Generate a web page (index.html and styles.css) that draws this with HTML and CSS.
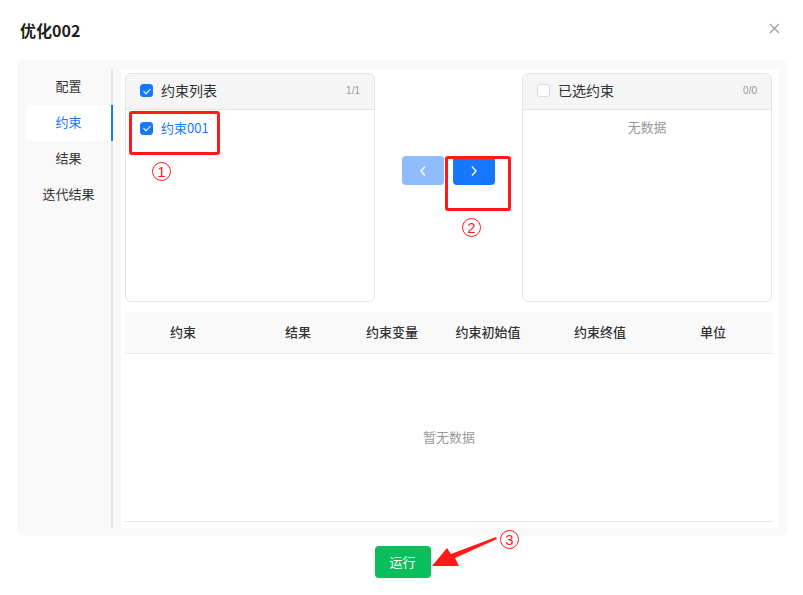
FILE: index.html
```html
<!DOCTYPE html>
<html lang="zh-CN">

<head>
    <meta charset="UTF-8" />
    <title>优化002</title>
    <link rel="stylesheet" href="styles.css">
</head>

<body>
    <div class="dialog">
        <div class="dialog-header">
            <h2 class="dialog-title">优化002</h2>
            <span class="close">
                <svg width="11" height="11" viewBox="0 0 11 11"><path d="M1 1L10 10M10 1L1 10" stroke="#999" stroke-width="1.1" /></svg>
            </span>
        </div>

        <div class="panel">
            <ul class="side-menu">
                <li>配置</li>
                <li class="active">约束</li>
                <li>结果</li>
                <li>迭代结果</li>
            </ul>

            <div class="content">
                <div class="transfer">
                    <div class="transfer-list">
                        <div class="transfer-head">
                            <span class="check checked"></span>
                            <span class="head-title">约束列表</span>
                            <span class="head-count">1/1</span>
                        </div>
                        <div class="transfer-body">
                            <div class="transfer-item">
                                <span class="check checked"></span>
                                <span class="item-text">约束001</span>
                            </div>
                        </div>
                    </div>

                    <div class="transfer-ops">
                        <button class="op-btn disabled">
                            <svg width="8" height="12" viewBox="0 0 8 12"><path d="M6 1.5L2 6l4 4.5" fill="none" stroke="#fff" stroke-width="1.4" /></svg>
                        </button>
                        <button class="op-btn">
                            <svg width="8" height="12" viewBox="0 0 8 12"><path d="M2 1.5L6 6l-4 4.5" fill="none" stroke="#fff" stroke-width="1.4" /></svg>
                        </button>
                    </div>

                    <div class="transfer-list">
                        <div class="transfer-head">
                            <span class="check"></span>
                            <span class="head-title">已选约束</span>
                            <span class="head-count">0/0</span>
                        </div>
                        <div class="transfer-body">
                            <div class="no-data">无数据</div>
                        </div>
                    </div>
                </div>

                <div class="table">
                    <div class="table-head">
                        <div>约束</div>
                        <div>结果</div>
                        <div>约束变量</div>
                        <div>约束初始值</div>
                        <div>约束终值</div>
                        <div>单位</div>
                    </div>
                    <div class="table-empty">暂无数据</div>
                </div>
            </div>
        </div>

        <div class="dialog-footer">
            <button class="run-btn">运行</button>
        </div>

        <!-- 注释标记 -->
        <div class="mark box-1"></div>
        <div class="mark box-2"></div>
        <span class="num num-1">1</span>
        <span class="num num-2">2</span>
        <span class="num num-3">3</span>
        <svg class="arrow" width="70" height="36" viewBox="0 0 70 36">
            <polygon points="65,1 66,3 24,22 28,30 1,30 16,12 20,18" fill="#ff1a1a" />
        </svg>
    </div>
</body>

</html>
```

FILE: styles.css
```css
* {
    box-sizing: border-box;
}

body {
    margin: 0;
    font-family: "Noto Sans CJK SC", "Liberation Sans", sans-serif;
    color: #333;
    background: #fff;
}

.dialog {
    position: relative;
    width: 803px;
    height: 595px;
    padding: 0 16px 0 17px;
}

.dialog-header {
    height: 60px;
    display: flex;
    align-items: center;
    justify-content: space-between;
    padding: 0 7px 0 3px;
}

.dialog-title {
    margin: 0;
    font-size: 16px;
    font-weight: bold;
    color: #1f1f1f;
}

.close {
    display: flex;
    margin-top: -3px;
}

.panel {
    height: 476px;
    display: flex;
    background: #f9f9f9;
    border-radius: 6px;
    padding: 9px 9px 8px 0;
}

.side-menu {
    list-style: none;
    margin: 0;
    padding: 0 0 0 9px;
    width: 96px;
    border-right: 2px solid #e6e6e6;
    flex-shrink: 0;
}

.side-menu li {
    height: 36px;
    line-height: 34px;
    text-align: center;
    font-size: 13px;
    color: #333;
    margin-right: -2px;
    border-right: 2px solid transparent;
}

.side-menu li.active {
    background: #fff;
    color: #1677ff;
    border-right-color: #1677ff;
}

.content {
    flex: 1;
    margin-left: 8px;
    background: #fff;
    padding: 4px 5px 6px 4px;
    display: flex;
    flex-direction: column;
}

.transfer {
    display: flex;
    height: 229px;
    margin-bottom: 10px;
    padding-right: 1px;
}

.transfer-list {
    width: 250px;
    border: 1px solid #e5e5e5;
    border-radius: 6px;
    overflow: hidden;
    display: flex;
    flex-direction: column;
}

.transfer-head {
    height: 36px;
    background: #f5f5f5;
    border-bottom: 1px solid #e5e5e5;
    display: flex;
    align-items: center;
    padding: 0 14px;
}

.head-title {
    margin-left: 8px;
    font-size: 14px;
    line-height: 16px;
    margin-top: -3px;
    color: #333;
}

.head-count {
    margin-left: auto;
    font-family: "Liberation Sans", sans-serif;
    font-size: 10px;
    color: #999;
    margin-top: -2px;
}

.check {
    width: 13px;
    height: 13px;
    border: 1px solid #d9d9d9;
    border-radius: 3px;
    background: #fff;
    position: relative;
    flex-shrink: 0;
    margin-top: -2px;
}

.check.checked {
    background: #1677ff;
    border-color: #1677ff;
}

.check.checked::after {
    content: "";
    position: absolute;
    left: 3.5px;
    top: 1.5px;
    width: 3px;
    height: 6px;
    border: solid #fff;
    border-width: 0 1.4px 1.4px 0;
    transform: rotate(45deg);
}

.transfer-body {
    flex: 1;
}

.transfer-item {
    display: flex;
    align-items: center;
    height: 38px;
    padding: 0 14px;
}

.item-text {
    margin-left: 8px;
    font-size: 13px;
    line-height: 16px;
    margin-top: -3px;
    color: #1677ff;
}

.no-data {
    text-align: center;
    font-size: 13px;
    color: #999;
    padding-top: 7px;
}

.transfer-ops {
    flex: 1;
    display: flex;
    justify-content: center;
    align-items: center;
    gap: 9px;
    padding-bottom: 34px;
}

.op-btn {
    width: 42px;
    height: 29px;
    border: none;
    border-radius: 4px;
    background: #1677ff;
    display: flex;
    align-items: center;
    justify-content: center;
    padding: 0;
}

.op-btn.disabled {
    background: #8fbcff;
}

.table {
    flex: 1;
    display: flex;
    flex-direction: column;
    border-bottom: 1px solid #e8e8e8;
}

.table-head {
    height: 42px;
    display: grid;
    grid-template-columns: 116px 114px 74px 118px 106px 120px;
    align-items: center;
    background: #f9f9f9;
    border-bottom: 1px solid #ebebeb;
    font-size: 13px;
    font-weight: 500;
    color: #333;
    padding-bottom: 2px;
}

.table-head div {
    text-align: center;
}

.table-empty {
    flex: 1;
    display: flex;
    align-items: center;
    justify-content: center;
    font-size: 13px;
    color: #999;
    padding-bottom: 2px;
}

.dialog-footer {
    display: flex;
    justify-content: center;
    padding-top: 10px;
    padding-left: 1px;
}

.run-btn {
    width: 56px;
    height: 32px;
    border: none;
    border-radius: 4px;
    background: #0abf5b;
    color: #fff;
    font-family: inherit;
    font-size: 13px;
    padding: 0 0 2px;
}

/* 注释 */
.mark {
    position: absolute;
    border: 3px solid #ff1a1a;
    border-radius: 3px;
}

.box-1 {
    left: 129px;
    top: 111px;
    width: 91px;
    height: 44px;
}

.box-2 {
    left: 445px;
    top: 156px;
    width: 66px;
    height: 55px;
}

.num {
    position: absolute;
    width: 19px;
    height: 19px;
    border: 1px solid #ff1a1a;
    border-radius: 50%;
    color: #ff1a1a;
    font-family: "Liberation Sans", sans-serif;
    font-size: 15px;
    line-height: 17px;
    text-align: center;
}

.num-1 {
    left: 152px;
    top: 162px;
}

.num-2 {
    left: 462px;
    top: 218px;
}

.num-3 {
    left: 500px;
    top: 530px;
}

.arrow {
    position: absolute;
    left: 431px;
    top: 536px;
}
```
